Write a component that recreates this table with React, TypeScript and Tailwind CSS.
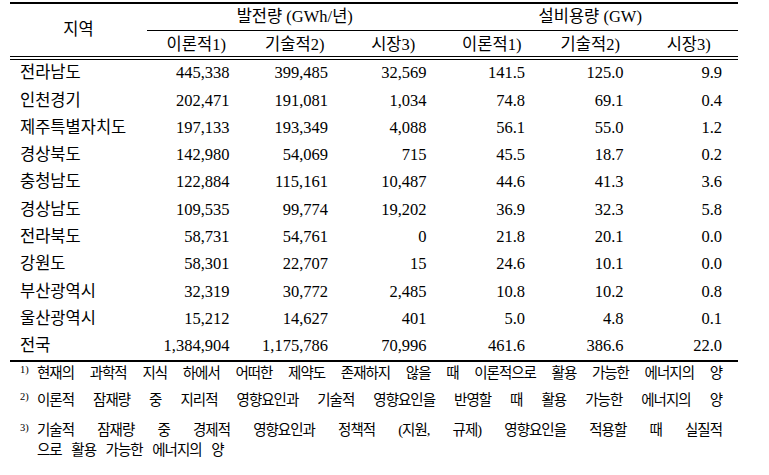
import React from "react";

const rows: string[][] = [
  ["전라남도", "445,338", "399,485", "32,569", "141.5", "125.0", "9.9"],
  ["인천경기", "202,471", "191,081", "1,034", "74.8", "69.1", "0.4"],
  ["제주특별자치도", "197,133", "193,349", "4,088", "56.1", "55.0", "1.2"],
  ["경상북도", "142,980", "54,069", "715", "45.5", "18.7", "0.2"],
  ["충청남도", "122,884", "115,161", "10,487", "44.6", "41.3", "3.6"],
  ["경상남도", "109,535", "99,774", "19,202", "36.9", "32.3", "5.8"],
  ["전라북도", "58,731", "54,761", "0", "21.8", "20.1", "0.0"],
  ["강원도", "58,301", "22,707", "15", "24.6", "10.1", "0.0"],
  ["부산광역시", "32,319", "30,772", "2,485", "10.8", "10.2", "0.8"],
  ["울산광역시", "15,212", "14,627", "401", "5.0", "4.8", "0.1"],
  ["전국", "1,384,904", "1,175,786", "70,996", "461.6", "386.6", "22.0"],
];

const subHeads = ["이론적1)", "기술적2)", "시장3)", "이론적1)", "기술적2)", "시장3)"];

const font = "font-['Liberation_Serif','Noto_Sans_CJK_KR',serif]";

function Note({ mark, children }: { mark: string; children: React.ReactNode }) {
  return (
    <div className="flex">
      <span className="w-[17px] shrink-0 text-[10.5px] tracking-normal leading-none pt-[3px]">{mark}</span>
      <div className="flex-1">{children}</div>
    </div>
  );
}

export default function App() {
  return (
    <div className={`w-[769px] h-[475px] bg-white text-black pt-[2px] pl-[10px] ${font}`}>
      <div className="w-[728px] text-[16.5px]">
        <div className="border-t-2 border-black" />

        {/* 헤더 */}
        <div className="grid grid-cols-[137px_repeat(6,minmax(0,1fr))] grid-rows-[27px_25px]">
          <div className="row-span-2 flex items-center justify-center">지역</div>
          <div className="col-span-3 border-b border-black flex items-center justify-center">
            발전량 (GWh/년)
          </div>
          <div className="col-span-3 border-b border-black flex items-center justify-center">
            설비용량 (GW)
          </div>
          {subHeads.map((h, i) => (
            <div key={i} className="flex items-center justify-center pt-[3px]">
              {h}
            </div>
          ))}
        </div>

        <div className="h-[4px] border-t border-b border-black" />

        {/* 본문 */}
        {rows.map((r) => (
          <div
            key={r[0]}
            className="grid grid-cols-[137px_repeat(6,minmax(0,1fr))] h-[27.3px] items-center"
          >
            <div className="pl-[10px]">{r[0]}</div>
            {r.slice(1).map((v, i) => (
              <div key={i} className="text-right pr-[16px]">
                {v}
              </div>
            ))}
          </div>
        ))}

        <div className="border-t-2 border-black" />
      </div>

      {/* 각주 */}
      <div className="w-[712px] pl-[10px] text-[14.5px] tracking-[-1px]">
        <div className="leading-[22px]">
          <Note mark="1)">
            <div className="text-justify [text-align-last:justify]">
              현재의 과학적 지식 하에서 어떠한 제약도 존재하지 않을 때 이론적으로 활용 가능한 에너지의 양
            </div>
          </Note>
        </div>
        <div className="leading-[22px] mt-[5px]">
          <Note mark="2)">
            <div className="text-justify [text-align-last:justify]">
              이론적 잠재량 중 지리적 영향요인과 기술적 영향요인을 반영할 때 활용 가능한 에너지의 양
            </div>
          </Note>
        </div>
        <div className="leading-[20px] mt-[9px]">
          <Note mark="3)">
            <div className="text-justify [text-align-last:justify]">
              기술적 잠재량 중 경제적 영향요인과 정책적 (지원, 규제) 영향요인을 적용할 때 실질적
            </div>
            <div className="[word-spacing:7px]">으로 활용 가능한 에너지의 양</div>
          </Note>
        </div>
      </div>
    </div>
  );
}
